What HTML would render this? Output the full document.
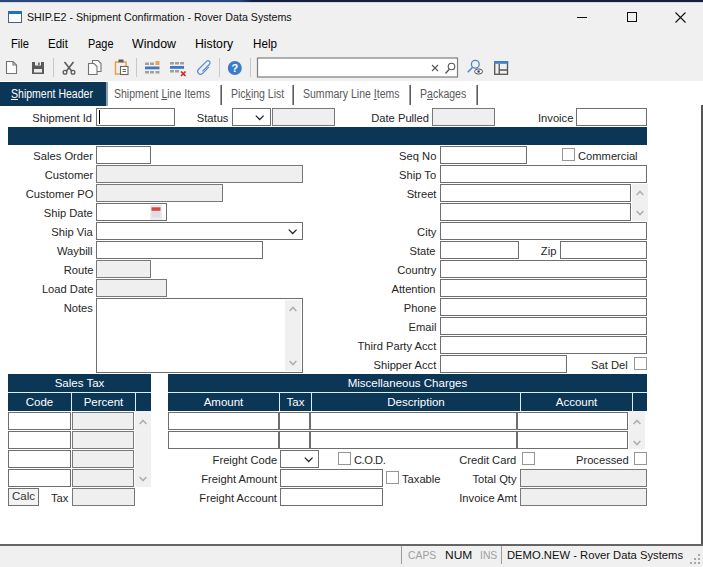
<!DOCTYPE html><html><head><meta charset="utf-8"><title>SHIP.E2 - Shipment Confirmation - Rover Data Systems</title><style>
*{box-sizing:border-box;margin:0;padding:0}
html,body{width:703px;height:567px;overflow:hidden;background:#f0f0f0}
body{position:relative;font-family:"Liberation Sans",sans-serif;font-size:12px;color:#000}
.a{position:absolute}
.lbl{position:absolute;text-align:right;white-space:nowrap;font-size:11.8px;line-height:18px;height:18px;color:#262626;margin-top:1px;transform:scaleX(.947);transform-origin:100% 0}
.lbl.l{text-align:left;transform-origin:0 0}
.in{position:absolute;height:18px;border:1px solid #6e6e6e;background:#fff}
.dis{position:absolute;height:18px;border:1px solid #787878;background:#efefef}
.cb{position:absolute;width:13px;height:13px;border:1px solid #969696;background:#fff}
.nav{position:absolute;background:#0c3656;color:#fff;text-align:center;font-size:11.5px;line-height:17px;white-space:nowrap}
.tab{position:absolute;top:85px;height:19px;line-height:19px;font-size:12px;color:#5a5a5a;white-space:nowrap;transform:scaleX(.877);transform-origin:0 0}
.sep{position:absolute;top:85px;width:2px;height:20px;background:linear-gradient(90deg,#9c9c9c 0,#9c9c9c 50%,#5c5c5c 50%,#5c5c5c 100%)}
.menu{position:absolute;top:35px;font-size:12px;transform-origin:0 0;line-height:18px;color:#000;white-space:nowrap}
.sb{position:absolute;background:#f0f0f0}
u{text-decoration:underline}
</style></head><body>
<div class="a" style="left:0;top:0;width:703px;height:2px;background:linear-gradient(90deg,#27477c 0,#27477c 34%,#131f3c 36%,#131f3c 100%)"></div><div class="a" style="left:0;top:2px;width:703px;height:1px;background:#d3d9e3"></div>
<div class="a" style="left:8px;top:11px;width:14px;height:12px;border:1px solid #4a5f80;border-top:3px solid #1a73c8;background:#fbfbfb"></div>
<div class="a" style="left:27px;top:9px;font-size:11.5px;line-height:16px;white-space:nowrap;color:#111;transform:scaleX(.927);transform-origin:0 0" id="title">SHIP.E2 - Shipment Confirmation - Rover Data Systems</div>
<svg class="a" style="left:560px;top:2px" width="143" height="30" viewBox="0 0 143 30"><g stroke="#111" stroke-width="1" fill="none" shape-rendering="crispEdges"><path d="M17 15.5h10"/><rect x="67.5" y="10.5" width="9" height="9"/></g><path d="M115.5 10.5l10 10M125.5 10.5l-10 10" stroke="#111" stroke-width="1.1" fill="none"/></svg>
<div class="menu" style="left:11px;transform:scaleX(0.93)">File</div>
<div class="menu" style="left:47.5px;transform:scaleX(0.96)">Edit</div>
<div class="menu" style="left:87.5px;transform:scaleX(0.91)">Page</div>
<div class="menu" style="left:132px;transform:scaleX(1.03)">Window</div>
<div class="menu" style="left:194.5px;transform:scaleX(1.02)">History</div>
<div class="menu" style="left:252.5px;transform:scaleX(0.97)">Help</div>
<svg class="a" style="left:0;top:56px" width="703" height="24" viewBox="0 0 703 24">
<path d="M53.500 2v19M136.500 2v19M219.500 2v19M250.500 2v19" stroke="#c9c9c9" stroke-width="1"/>
<g fill="none" stroke="#747474" stroke-width="1.100">
<path d="M6.500 5.500h6.500l3.500 3.500v8.500h-10z" fill="#fdfdfd"/><path d="M13 5.500v3.500h3.500"/>
</g>
<g>
<rect x="32" y="6" width="12" height="12" fill="#5a5a5a"/>
<rect x="35" y="6" width="6" height="3.500" fill="#ececec"/><rect x="38.200" y="6.500" width="1.500" height="2.500" fill="#5a5a5a"/>
<rect x="34" y="13" width="8" height="3.500" fill="#ececec"/>
</g>
<g fill="none" stroke="#5a5a5a" stroke-width="1.300">
<path d="M64.500 6l7.500 9.500M73.500 6l-7.500 9.500" stroke-width="1.600"/><circle cx="65" cy="16.300" r="1.900"/><circle cx="73" cy="16.300" r="1.900"/>
</g>
<g fill="#fbfbfb" stroke="#747474" stroke-width="1.100">
<path d="M92.500 4.500h5.500l3 3v8h-8.500z"/><path d="M88.500 7.500h5.500l3 3v8h-8.500z"/>
</g>
<g>
<path d="M119 6h-3.500v12h4.500M123 6h3v4" fill="none" stroke="#e8a04a" stroke-width="1.500"/>
<rect x="118.500" y="3.500" width="5" height="3" fill="#5a5a5a"/>
<rect x="120.500" y="10.500" width="7.500" height="8" fill="#fff" stroke="#666" stroke-width="1.100"/><path d="M122.500 13.500h3.500M122.500 15.500h3.500" stroke="#666" stroke-width="1"/>
</g>
<g>
<rect x="145" y="6.500" width="4" height="2.500" fill="#a0a0a0"/><rect x="150" y="6.500" width="4" height="2.500" fill="#a0a0a0"/><rect x="155.500" y="5" width="4" height="4" fill="#eda252"/>
<rect x="145" y="10.500" width="14.500" height="2.800" fill="#3f78c0"/>
<rect x="145" y="15" width="4" height="2.500" fill="#a0a0a0"/><rect x="150" y="15" width="4" height="2.500" fill="#a0a0a0"/><rect x="155.500" y="15" width="4" height="2.500" fill="#a0a0a0"/>
</g>
<g>
<rect x="170" y="6" width="4" height="2.500" fill="#a0a0a0"/><rect x="175" y="6" width="4" height="2.500" fill="#a0a0a0"/><rect x="180" y="6" width="4" height="2.500" fill="#a0a0a0"/>
<rect x="170" y="10" width="14" height="2.800" fill="#3f78c0"/>
<rect x="170" y="14" width="4" height="2.500" fill="#a0a0a0"/><rect x="175" y="14" width="4" height="2.500" fill="#a0a0a0"/>
<path d="M181 15.500l4.500 4.500M185.500 15.500l-4.500 4.500" stroke="#d8232a" stroke-width="1.700"/>
</g>
<path transform="translate(204.300 11.600) rotate(45)" d="M2.900 -3.500V5.200a2.900 2.900 0 0 1 -5.800 0V-6a2.100 2.100 0 0 1 4.200 0V4" fill="none" stroke="#5a8ccb" stroke-width="1.200"/>
<circle cx="234.800" cy="12" r="7" fill="#3a7cc6"/>
<text x="234.800" y="16" font-family="Liberation Sans, sans-serif" font-weight="bold" font-size="11" fill="#fff" text-anchor="middle">?</text>
<rect x="257.500" y="2" width="200" height="19" fill="#fff" stroke="#7d7d7d" stroke-width="1.200"/>
<path d="M432 9l6 6M438 9l-6 6" stroke="#555" stroke-width="1.100"/>
<circle cx="451.500" cy="10.500" r="3.300" fill="none" stroke="#555" stroke-width="1.100"/><path d="M449 13.500l-3.500 4" stroke="#555" stroke-width="1.300"/>
<g fill="none"><circle cx="475.300" cy="8.300" r="3.900" stroke="#4a86c5" stroke-width="1.300"/><path d="M472.600 11.300l-4.800 5" stroke="#4a86c5" stroke-width="1.500"/><ellipse cx="478.600" cy="15.500" rx="4" ry="2.600" fill="#f0f0f0" stroke="#555" stroke-width="1"/><circle cx="478.600" cy="15.500" r="1.200" fill="#444"/></g>
<g fill="none" stroke="#555" stroke-width="1.300"><rect x="494.700" y="5.700" width="12.800" height="12.600"/><path d="M499.200 8v10.300M499.200 14h8.300"/></g><rect x="494" y="5" width="14.200" height="2.800" fill="#3f7fd0"/>
</svg>
<div class="a" style="left:0;top:81px;width:703px;height:465px;background:#fff"></div>
<div class="a" style="left:701px;top:105px;width:2px;height:441px;background:#555"></div>
<div class="a" style="left:0;top:544px;width:703px;height:2px;background:#666"></div>
<div class="a" style="left:0;top:82px;width:106px;height:24px;background:#0c3656"></div>
<div class="a" style="left:106px;top:82px;width:2px;height:24px;background:#8fa2b5"></div>
<div class="tab" style="left:11px;color:#fff" id="t0"><u>S</u>hipment Header</div>
<div class="tab" style="left:114px" id="t1">Shipment <u>L</u>ine Items</div>
<div class="tab" style="left:231px" id="t2">Pic<u>k</u>ing List</div>
<div class="tab" style="left:303px" id="t3">Summary Line <u>I</u>tems</div>
<div class="tab" style="left:420px" id="t4">P<u>a</u>ckages</div>
<div class="sep" style="left:220px"></div>
<div class="sep" style="left:292px"></div>
<div class="sep" style="left:409px"></div>
<div class="sep" style="left:476px"></div>
<div class="lbl" style="right:611px;top:108px">Shipment Id</div>
<div class="in" style="left:96px;top:108px;width:79px;height:18px"></div>
<div class="a" style="left:99px;top:110px;width:1px;height:14px;background:#000"></div>
<div class="lbl" style="right:474.5px;top:108px">Status</div>
<div class="in" style="left:232px;top:108px;width:39px;height:18px"></div>
<svg class="a" style="left:255px;top:115px" width="10" height="6" viewBox="0 0 10 6"><path d="M0.800 0.600l3.900 3.900l3.900-3.900" fill="none" stroke="#222" stroke-width="1.250"/></svg>
<div class="dis" style="left:272px;top:108px;width:63px;height:18px"></div>
<div class="lbl" style="right:274.5px;top:108px">Date Pulled</div>
<div class="dis" style="left:432px;top:108px;width:63px;height:18px"></div>
<div class="lbl" style="right:130px;top:108px">Invoice</div>
<div class="in" style="left:576px;top:108px;width:71px;height:18px"></div>
<div class="a" style="left:8px;top:127px;width:639px;height:18px;background:#0c3656"></div>
<div class="lbl" style="right:610px;top:146px">Sales Order</div>
<div class="in" style="left:96px;top:146px;width:55px;height:18px"></div>
<div class="lbl" style="right:610px;top:165px">Customer</div>
<div class="dis" style="left:96px;top:165px;width:207px;height:18px"></div>
<div class="lbl" style="right:610px;top:184px">Customer PO</div>
<div class="dis" style="left:96px;top:184px;width:127px;height:18px"></div>
<div class="lbl" style="right:610px;top:203px">Ship Date</div>
<div class="in" style="left:96px;top:203px;width:71px;height:18px"></div>
<div class="lbl" style="right:610px;top:222px">Ship Via</div>
<div class="in" style="left:96px;top:222px;width:207px;height:18px"></div>
<div class="lbl" style="right:610px;top:241px">Waybill</div>
<div class="in" style="left:96px;top:241px;width:167px;height:18px"></div>
<div class="lbl" style="right:610px;top:260px">Route</div>
<div class="dis" style="left:96px;top:260px;width:55px;height:18px"></div>
<div class="lbl" style="right:610px;top:279px">Load Date</div>
<div class="dis" style="left:96px;top:279px;width:71px;height:18px"></div>
<svg class="a" style="left:288px;top:229px" width="10" height="6" viewBox="0 0 10 6"><path d="M0.800 0.600l3.900 3.900l3.900-3.900" fill="none" stroke="#222" stroke-width="1.250"/></svg>
<svg class="a" style="left:150px;top:205px" width="12" height="15" viewBox="0 0 12 15"><rect x="0" y="0" width="12" height="15" fill="#ececec"/><rect x="1.500" y="5" width="9" height="7.500" fill="#dddde9"/><rect x="1.500" y="2.300" width="9" height="3.500" fill="#d9483b"/></svg>
<div class="lbl" style="right:610px;top:298px">Notes</div>
<div class="in" style="left:96px;top:298px;width:207px;height:75px"></div>
<div class="sb" style="left:285px;top:300px;width:16px;height:71px"></div>
<svg class="a" style="left:289.0px;top:306px" width="8" height="6" viewBox="0 0 8 6"><path d="M0.600 5l3.400-3.600l3.400 3.600" fill="none" stroke="#b0b0b0" stroke-width="1.600"/></svg>
<svg class="a" style="left:289.0px;top:359.5px" width="8" height="6" viewBox="0 0 8 6"><path d="M0.600 1l3.400 3.600l3.400-3.600" fill="none" stroke="#b0b0b0" stroke-width="1.600"/></svg>
<div class="lbl" style="right:267px;top:146px">Seq No</div>
<div class="in" style="left:440px;top:146px;width:87px;height:18px"></div>
<div class="lbl" style="right:267px;top:165px">Ship To</div>
<div class="in" style="left:440px;top:165px;width:207px;height:18px"></div>
<div class="lbl" style="right:267px;top:184px">Street</div>
<div class="in" style="left:440px;top:184px;width:191px;height:18px"></div>
<div class="in" style="left:440px;top:203px;width:191px;height:18px"></div>
<div class="lbl" style="right:267px;top:222px">City</div>
<div class="in" style="left:440px;top:222px;width:207px;height:18px"></div>
<div class="lbl" style="right:267px;top:241px">State</div>
<div class="in" style="left:440px;top:241px;width:79px;height:18px"></div>
<div class="lbl" style="right:267px;top:260px">Country</div>
<div class="in" style="left:440px;top:260px;width:207px;height:18px"></div>
<div class="lbl" style="right:267px;top:279px">Attention</div>
<div class="in" style="left:440px;top:279px;width:207px;height:18px"></div>
<div class="lbl" style="right:267px;top:298px">Phone</div>
<div class="in" style="left:440px;top:298px;width:207px;height:18px"></div>
<div class="lbl" style="right:267px;top:317px">Email</div>
<div class="in" style="left:440px;top:317px;width:207px;height:18px"></div>
<div class="lbl" style="right:267px;top:336px">Third Party Acct</div>
<div class="in" style="left:440px;top:336px;width:207px;height:18px"></div>
<div class="lbl" style="right:267px;top:355px">Shipper Acct</div>
<div class="in" style="left:440px;top:355px;width:127px;height:18px"></div>
<div class="sb" style="left:632px;top:184px;width:16px;height:37px"></div>
<svg class="a" style="left:636.0px;top:190px" width="8" height="6" viewBox="0 0 8 6"><path d="M0.600 5l3.400-3.600l3.400 3.600" fill="none" stroke="#b0b0b0" stroke-width="1.600"/></svg>
<svg class="a" style="left:636.0px;top:209.5px" width="8" height="6" viewBox="0 0 8 6"><path d="M0.600 1l3.400 3.600l3.400-3.600" fill="none" stroke="#b0b0b0" stroke-width="1.600"/></svg>
<div class="cb" style="left:562px;top:148px"></div>
<div class="lbl l" style="left:578px;top:146px">Commercial</div>
<div class="lbl" style="right:147px;top:241px">Zip</div>
<div class="in" style="left:560px;top:241px;width:87px;height:18px"></div>
<div class="lbl" style="right:75px;top:355px">Sat Del</div>
<div class="cb" style="left:634px;top:357px"></div>
<div class="nav" style="left:8px;top:374px;width:143px;height:18px;line-height:18px">Sales Tax</div>
<div class="a" style="left:8px;top:392px;width:143px;height:19px;background:#dcedfb"></div>
<div class="nav" style="left:8px;top:393px;width:63px;height:18px;line-height:18px">Code</div>
<div class="nav" style="left:72px;top:393px;width:63px;height:18px;line-height:18px">Percent</div>
<div class="nav" style="left:136px;top:393px;width:15px;height:18px;line-height:18px"></div>
<div class="in" style="left:8px;top:412px;width:63px;height:18px"></div>
<div class="dis" style="left:72px;top:412px;width:62px;height:18px"></div>
<div class="in" style="left:8px;top:431px;width:63px;height:18px"></div>
<div class="dis" style="left:72px;top:431px;width:62px;height:18px"></div>
<div class="in" style="left:8px;top:450px;width:63px;height:18px"></div>
<div class="dis" style="left:72px;top:450px;width:62px;height:18px"></div>
<div class="in" style="left:8px;top:469px;width:63px;height:18px"></div>
<div class="dis" style="left:72px;top:469px;width:62px;height:18px"></div>
<div class="sb" style="left:135px;top:411px;width:16px;height:76px"></div>
<svg class="a" style="left:139.0px;top:418.5px" width="8" height="6" viewBox="0 0 8 6"><path d="M0.600 5l3.400-3.600l3.400 3.600" fill="none" stroke="#b0b0b0" stroke-width="1.600"/></svg>
<svg class="a" style="left:139.0px;top:476px" width="8" height="6" viewBox="0 0 8 6"><path d="M0.600 1l3.400 3.600l3.400-3.600" fill="none" stroke="#b0b0b0" stroke-width="1.600"/></svg>
<div class="a" style="left:8px;top:488px;width:31px;height:18px;border:1px solid #707070;background:#f3f3f3;font-size:11.5px;line-height:15px;text-align:center;color:#333">Calc</div>
<div class="lbl l" style="left:51px;top:488px">Tax</div>
<div class="dis" style="left:72px;top:488px;width:63px;height:18px"></div>
<div class="nav" style="left:168px;top:374px;width:479px;height:18px;line-height:18px">Miscellaneous Charges</div>
<div class="a" style="left:168px;top:392px;width:479px;height:19px;background:#dcedfb"></div>
<div class="nav" style="left:168px;top:393px;width:111px;height:18px;line-height:18px">Amount</div>
<div class="nav" style="left:280px;top:393px;width:31px;height:18px;line-height:18px">Tax</div>
<div class="nav" style="left:312px;top:393px;width:208px;height:18px;line-height:18px">Description</div>
<div class="nav" style="left:521px;top:393px;width:111px;height:18px;line-height:18px">Account</div>
<div class="nav" style="left:633px;top:393px;width:14px;height:18px;line-height:18px"></div>
<div class="in" style="left:168px;top:412px;width:111px;height:18px"></div>
<div class="in" style="left:279px;top:412px;width:31px;height:18px"></div>
<div class="in" style="left:310px;top:412px;width:207px;height:18px"></div>
<div class="in" style="left:517px;top:412px;width:111px;height:18px"></div>
<div class="in" style="left:168px;top:431px;width:111px;height:18px"></div>
<div class="in" style="left:279px;top:431px;width:31px;height:18px"></div>
<div class="in" style="left:310px;top:431px;width:207px;height:18px"></div>
<div class="in" style="left:517px;top:431px;width:111px;height:18px"></div>
<div class="sb" style="left:629px;top:411px;width:16px;height:38px"></div>
<svg class="a" style="left:633.0px;top:418.5px" width="8" height="6" viewBox="0 0 8 6"><path d="M0.600 5l3.400-3.600l3.400 3.600" fill="none" stroke="#b0b0b0" stroke-width="1.600"/></svg>
<svg class="a" style="left:633.0px;top:439.5px" width="8" height="6" viewBox="0 0 8 6"><path d="M0.600 1l3.400 3.600l3.400-3.600" fill="none" stroke="#b0b0b0" stroke-width="1.600"/></svg>
<div class="lbl" style="right:426px;top:450px">Freight Code</div>
<div class="in" style="left:280px;top:450px;width:39px;height:18px"></div>
<svg class="a" style="left:304px;top:457px" width="10" height="6" viewBox="0 0 10 6"><path d="M0.800 0.600l3.900 3.900l3.900-3.900" fill="none" stroke="#222" stroke-width="1.250"/></svg>
<div class="cb" style="left:338px;top:452px"></div>
<div class="lbl l" style="left:354px;top:450px;letter-spacing:-.5px">C.O.D.</div>
<div class="lbl" style="right:186.5px;top:450px">Credit Card</div>
<div class="cb" style="left:522px;top:452px"></div>
<div class="lbl" style="right:74px;top:450px">Processed</div>
<div class="cb" style="left:634px;top:452px"></div>
<div class="lbl" style="right:426px;top:469px">Freight Amount</div>
<div class="in" style="left:280px;top:469px;width:103px;height:18px"></div>
<div class="cb" style="left:386px;top:471px"></div>
<div class="lbl l" style="left:402px;top:469px">Taxable</div>
<div class="lbl" style="right:186.5px;top:469px">Total Qty</div>
<div class="dis" style="left:520px;top:469px;width:127px;height:18px"></div>
<div class="lbl" style="right:426px;top:488px">Freight Account</div>
<div class="in" style="left:280px;top:488px;width:103px;height:18px"></div>
<div class="lbl" style="right:186.5px;top:488px">Invoice Amt</div>
<div class="dis" style="left:520px;top:488px;width:127px;height:18px"></div>
<div class="a" style="left:0;top:546px;width:703px;height:21px;background:#f0f0f0"></div>
<div class="a" style="left:401px;top:546px;width:1px;height:18px;background:#9a9a9a"></div>
<div class="a" style="left:501px;top:546px;width:1px;height:18px;background:#9a9a9a"></div>
<div class="a" style="left:407.5px;top:546px;font-size:11.5px;line-height:18px;color:#a0a0a0;white-space:nowrap;transform:scaleX(0.9);transform-origin:0 0">CAPS</div>
<div class="a" style="left:444.5px;top:546px;font-size:11.5px;line-height:18px;color:#111;white-space:nowrap;transform:scaleX(1.04);transform-origin:0 0">NUM</div>
<div class="a" style="left:479.5px;top:546px;font-size:11.5px;line-height:18px;color:#a0a0a0;white-space:nowrap;transform:scaleX(0.9);transform-origin:0 0">INS</div>
<div class="a" style="left:507px;top:546px;font-size:11.5px;line-height:18px;color:#111;white-space:nowrap;transform:scaleX(0.977);transform-origin:0 0">DEMO.NEW - Rover Data Systems</div>
<svg class="a" style="left:690px;top:554px" width="10" height="10" viewBox="0 0 10 10"><rect x="8" y="0" width="2" height="2" fill="#a8a8a8"/><rect x="4" y="4" width="2" height="2" fill="#a8a8a8"/><rect x="8" y="4" width="2" height="2" fill="#a8a8a8"/><rect x="0" y="8" width="2" height="2" fill="#a8a8a8"/><rect x="4" y="8" width="2" height="2" fill="#a8a8a8"/><rect x="8" y="8" width="2" height="2" fill="#a8a8a8"/></svg>
</body></html>
